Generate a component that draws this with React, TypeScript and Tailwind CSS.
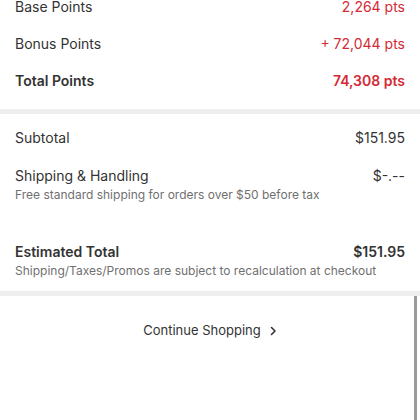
import React from "react";

const font = { fontFamily: "Inter, 'Liberation Sans', sans-serif" };

export default function App() {
  return (
    <div className="relative w-[420px] h-[420px] overflow-hidden bg-white text-[#333333]" style={font}>
      <div className="-mt-[4px] px-[15px] pb-[19px] flex flex-col gap-[17px]">
        <div className="flex justify-between items-center h-[20px] text-[14px]">
          <span>Base Points</span>
          <span className="text-[#d42a36]">2,264 pts</span>
        </div>
        <div className="flex justify-between items-center h-[20px] text-[14px]">
          <span>Bonus Points</span>
          <span className="text-[#d42a36]">+ 72,044 pts</span>
        </div>
        <div className="flex justify-between items-center h-[20px] text-[14px] font-semibold">
          <span>Total Points</span>
          <span className="text-[#d42a36]">74,308 pts</span>
        </div>
      </div>
      <div className="h-[5px] bg-[#eeeeee]" />
      <div className="px-[15px] pt-[13px] pb-[12px] flex flex-col">
        <div className="flex justify-between items-center h-[20px] text-[14px]">
          <span>Subtotal</span>
          <span>$151.95</span>
        </div>
        <div className="mt-[18px] flex justify-between items-center h-[20px] text-[14px]">
          <span>Shipping &amp; Handling</span>
          <span>$-.--</span>
        </div>
        <div className="mt-[2px] h-[16px] flex items-center text-[12px] text-[#707070]">
          Free standard shipping for orders over $50 before tax
        </div>
        <div className="mt-[38px] flex justify-between items-center h-[20px] text-[14px] font-semibold">
          <span>Estimated Total</span>
          <span>$151.95</span>
        </div>
        <div className="mt-[2px] h-[16px] flex items-center text-[12px] text-[#707070]">
          Shipping/Taxes/Promos are subject to recalculation at checkout
        </div>
      </div>
      <div className="h-[5px] bg-[#eeeeee]" />
      <div className="pt-[25px] flex justify-center items-center h-[20px] box-content text-[13px] gap-[9px]">
        <span>Continue Shopping</span>
        <svg width="7" height="10" viewBox="0 0 7 10" fill="none">
          <path d="M1.5 1.5 L5 5 L1.5 8.5" stroke="#333333" strokeWidth="1.6" strokeLinecap="round" strokeLinejoin="round" />
        </svg>
      </div>
      <div className="absolute right-[3px] top-[296px] bottom-0 w-[3px] bg-[#9a9a9a]" />
    </div>
  );
}
